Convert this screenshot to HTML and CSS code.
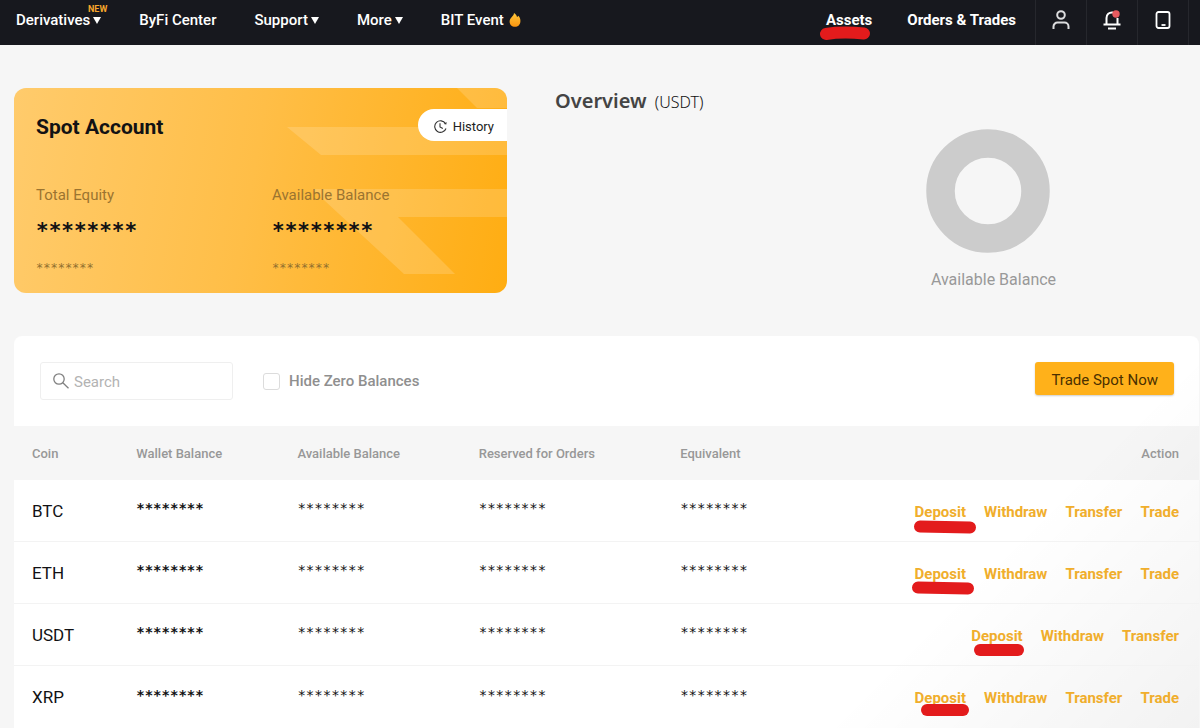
FILE: index.html
```html
<!DOCTYPE html>
<html lang="en">
<head>
<meta charset="utf-8">
<meta name="viewport" content="width=device-width, initial-scale=1">
<title>Spot Account</title>
<link rel="stylesheet" href="styles.css">
</head>
<body>
<header class="topbar">
  <nav class="menu" aria-label="Main">
    <a class="menu-link" href="#">Derivatives<svg class="caret" viewBox="0 0 8 7"><path d="M0 0h8L4 7z"/></svg><span class="new-tag">NEW</span></a>
    <a class="menu-link" href="#">ByFi Center</a>
    <a class="menu-link" href="#">Support<svg class="caret" viewBox="0 0 8 7"><path d="M0 0h8L4 7z"/></svg></a>
    <a class="menu-link" href="#">More<svg class="caret" viewBox="0 0 8 7"><path d="M0 0h8L4 7z"/></svg></a>
    <a class="menu-link" href="#">BIT Event<svg class="flame" viewBox="0 0 12 14"><defs><linearGradient id="fire" x1="0" y1="0" x2="0" y2="1"><stop offset="0" stop-color="#ffc83c"/><stop offset="1" stop-color="#f9930f"/></linearGradient></defs><path fill="url(#fire)" d="M5 0c2 1.200 2.800 2.600 3 4 .6-.2 1-.6 1.300-1.200C11 4.600 11.600 6.300 11.400 8.500 11.200 11.800 9 13.800 6 13.800S.7 11.800.6 8.700C.6 6.600 1.600 5.400 2.800 4 3.900 2.800 4.900 1.800 5 0z"/></svg></a>
  </nav>
  <nav class="account" aria-label="Account">
    <a class="account-link" href="#">Assets<svg class="mark mark-assets" viewBox="0 0 50 13"><path d="M6 7Q22 4.500 44 6.500"/></svg></a>
    <a class="account-link" href="#">Orders &amp; Trades</a>
    <div class="tools">
      <button class="tool" aria-label="Profile"><svg width="18" height="20" viewBox="0 0 18 20" fill="none" stroke="#dcdcde" stroke-width="2"><circle cx="9" cy="5" r="3.800"/><path d="M1.500 19v-2.500a4 4 0 0 1 4-4h7a4 4 0 0 1 4 4V19"/></svg></button>
      <button class="tool" aria-label="Notifications"><svg width="18" height="20" viewBox="0 0 18 20" fill="none" stroke="#fff" stroke-width="2"><path d="M10 2.500C6 2 3.500 4.500 3.500 8v6M14.500 8v6M.5 14.500h17M5 18.500h8"/><circle cx="13" cy="4" r="3.700" fill="#e75a5f" stroke="none"/></svg></button>
      <button class="tool" aria-label="Mobile app"><svg width="16" height="18" viewBox="0 0 16 18" fill="none" stroke="#fff" stroke-width="1.800"><rect x="1.500" y="1" width="13" height="16" rx="2"/><path d="M6.500 14h4"/></svg></button>
    </div>
  </nav>
</header>

<main class="page">
  <div class="summary">
    <section class="card">
      <svg class="card-art" viewBox="0 0 233 205" preserveAspectRatio="xMaxYMid slice"><g fill="#fff" fill-opacity=".16"><path d="M183 0h50v20h-30z"/><path d="M13 39h220v28H47z"/><path d="M38 101h195v28H124l57 57h-51z"/></g></svg>
      <h1 class="card-title">Spot Account</h1>
      <button class="history"><svg width="13" height="13" viewBox="0 0 13 13" fill="none" stroke="#333" stroke-width="1.100"><path d="M11.500 3.600A5.800 5.800 0 1 0 12 8.500M6 3.300V7l2.800 1.600"/><path d="M9.800 3.900l2.500.6.300-2.600z" fill="#333" stroke="none"/></svg>History</button>
      <div class="stats">
        <div class="stat"><span class="stat-label">Total Equity</span><strong class="stat-value">********</strong><span class="stat-sub">********</span></div>
        <div class="stat"><span class="stat-label">Available Balance</span><strong class="stat-value">********</strong><span class="stat-sub">********</span></div>
      </div>
    </section>
    <section class="overview">
      <h2 class="overview-title">Overview <span class="unit">(USDT)</span></h2>
      <figure class="chart">
        <svg class="donut" viewBox="0 0 124 124"><circle cx="62" cy="62" r="47.500" fill="none" stroke="#ccc" stroke-width="28.500"/></svg>
        <figcaption class="chart-label">Available Balance</figcaption>
      </figure>
    </section>
  </div>

  <section class="panel">
    <div class="filters">
      <label class="search"><svg width="16" height="16" viewBox="0 0 16 16" fill="none" stroke="#808080" stroke-width="1.300"><circle cx="6" cy="6" r="5.200"/><path d="M9.800 9.800l5.700 5.500"/></svg><input class="search-input" type="text" placeholder="Search" aria-label="Search"></label>
      <label class="hide-zero"><input class="check" type="checkbox">Hide Zero Balances</label>
      <button class="trade-now">Trade Spot Now</button>
    </div>
    <table class="coins">
      <colgroup><col class="col-coin"><col class="col-wallet"><col class="col-available"><col class="col-reserved"><col class="col-equivalent"><col></colgroup>
      <thead>
        <tr><th>Coin</th><th>Wallet Balance</th><th>Available Balance</th><th>Reserved for Orders</th><th>Equivalent</th><th class="action-head">Action</th></tr>
      </thead>
      <tbody>
        <tr><td class="coin">BTC</td><td class="stars wallet">********</td><td class="stars">********</td><td class="stars">********</td><td class="stars">********</td>
          <td><div class="actions"><a class="action" href="#">Deposit<svg class="mark mark-btc" viewBox="0 0 62 14"><path d="M6 6.500L56 7.500"/></svg></a><a class="action" href="#">Withdraw</a><a class="action" href="#">Transfer</a><a class="action" href="#">Trade</a></div></td></tr>
        <tr><td class="coin">ETH</td><td class="stars wallet">********</td><td class="stars">********</td><td class="stars">********</td><td class="stars">********</td>
          <td><div class="actions"><a class="action" href="#">Deposit<svg class="mark mark-eth" viewBox="0 0 62 14"><path d="M6 6.500L56 7.500"/></svg></a><a class="action" href="#">Withdraw</a><a class="action" href="#">Transfer</a><a class="action" href="#">Trade</a></div></td></tr>
        <tr><td class="coin">USDT</td><td class="stars wallet">********</td><td class="stars">********</td><td class="stars">********</td><td class="stars">********</td>
          <td><div class="actions"><a class="action" href="#">Deposit<svg class="mark mark-usdt" viewBox="0 0 50 12"><path d="M6 6h38"/></svg></a><a class="action" href="#">Withdraw</a><a class="action" href="#">Transfer</a></div></td></tr>
        <tr><td class="coin">XRP</td><td class="stars wallet">********</td><td class="stars">********</td><td class="stars">********</td><td class="stars">********</td>
          <td><div class="actions"><a class="action" href="#">Deposit<svg class="mark mark-xrp" viewBox="0 0 48 12"><path d="M6 6h36"/></svg></a><a class="action" href="#">Withdraw</a><a class="action" href="#">Transfer</a><a class="action" href="#">Trade</a></div></td></tr>
      </tbody>
    </table>
  </section>
</main>
</body>
</html>
```
FILE: styles.css
```css
* { box-sizing: border-box; }

body {
  margin: 0;
  background: #f6f6f6;
  color: #121214;
  font-family: Roboto, "Liberation Sans", sans-serif;
  font-size: 15px;
}

a { color: inherit; text-decoration: none; }
button, input { font: inherit; color: inherit; }
button { border: 0; padding: 0; cursor: pointer; }

/* Top bar */
.topbar {
  display: flex;
  justify-content: space-between;
  height: 45px;
  background: #17181e;
  color: #fff;
  line-height: 40px;
}
.menu { display: flex; gap: 38px; padding-left: 16px; font-weight: 500; white-space: nowrap; }
.menu-link { position: relative; }
.caret { width: 8px; height: 7px; margin-left: 3px; fill: #fff; vertical-align: 1px; }
.flame { width: 12px; height: 14px; margin-left: 5px; vertical-align: -2px; }
.new-tag {
  position: absolute;
  top: 4px;
  right: -6px;
  color: #f7a62b;
  font-size: 9px;
  font-weight: 700;
  line-height: 10px;
}
.account { display: flex; padding-right: 11px; font-weight: 700; white-space: nowrap; }
.account-link { position: relative; margin-right: 35px; }
.account-link:nth-of-type(2) { margin-right: 19px; }
.tools { display: flex; border-right: 1px solid #26272d; }
.tool {
  display: flex;
  align-items: center;
  justify-content: center;
  width: 51px;
  padding-bottom: 6px;
  border-left: 1px solid #26272d;
  background: none;
}

/* Marker strokes under links */
.mark {
  position: absolute;
  overflow: visible;
  fill: none;
  stroke: #e31b1c;
  stroke-width: 12px;
  stroke-linecap: round;
  pointer-events: none;
}
.mark-assets { top: 27px; left: -6px; width: 50px; height: 13px; }
.mark-btc { top: 18px; left: -1px; width: 62px; height: 14px; }
.mark-eth { top: 17px; left: -3px; width: 62px; height: 14px; }
.mark-usdt { top: 18px; left: 3px; width: 50px; height: 12px; }
.mark-xrp { top: 16px; left: 6px; width: 48px; height: 12px; }

/* Summary */
.page { padding: 43px 1px 0 14px; }
.summary { display: grid; grid-template-columns: 493fr 644fr; gap: 48px; }
.card {
  position: relative;
  height: 205px;
  padding: 26px 22px;
  overflow: hidden;
  border-radius: 12px;
  background: linear-gradient(100deg, #ffcb6c, #ffbe47 48%, #ffad12);
}
.card-art { position: absolute; top: 0; right: 0; width: 233px; height: 205px; }
.card-title { position: relative; margin: 0; font-size: 21px; line-height: 26px; font-weight: 700; }
.history {
  position: absolute;
  top: 21px;
  right: 0;
  display: flex;
  align-items: center;
  gap: 6px;
  height: 32px;
  padding: 2px 13px 0 16px;
  border-radius: 16px 0 0 16px;
  background: #fff;
  color: #222;
  font-size: 13px;
}
.stats { position: relative; display: grid; grid-template-columns: 236fr 213fr; margin-top: 45px; }
.stat { display: flex; flex-direction: column; }
.stat-label { color: #9b7430; line-height: 20px; }
.stat-value { margin-top: 14px; font: 700 21px/24px "DejaVu Sans Mono", monospace; }
.stat-sub { margin-top: 17px; color: #92702f; font: 12px/16px "DejaVu Sans Mono", monospace; }

.overview { display: flex; align-items: flex-start; }
.overview-title {
  flex: 0 0 222px;
  margin: 0;
  color: #444;
  font-family: "Noto Sans", sans-serif;
  font-size: 20px;
  font-weight: 600;
  line-height: 26px;
}
.unit { margin-left: 3px; color: #111; font-size: 16px; font-weight: 300; }
.chart { flex: 1; margin: 41px 0 0; text-align: center; }
.donut { display: block; width: 124px; height: 124px; margin: 0 auto; }
.chart-label { margin-top: 17px; padding-left: 11px; color: #999; font-size: 16px; line-height: 20px; }

/* Balances panel */
.panel {
  margin-top: 43px;
  overflow: hidden;
  border-radius: 8px 8px 0 0;
  background: linear-gradient(135deg, transparent 76%, rgba(0, 0, 0, .05)), #fff;
}
.filters { display: flex; align-items: center; height: 90px; padding: 0 25px 0 26px; }
.search {
  display: flex;
  align-items: center;
  gap: 5px;
  width: 193px;
  height: 38px;
  padding: 0 12px;
  border: 1px solid #efefef;
  border-radius: 3px;
}
.search-input { flex: 1; min-width: 0; padding: 2px 0 0; border: 0; outline: 0; background: none; }
.search-input::placeholder { color: #b3b3b3; opacity: 1; }
.hide-zero { display: flex; align-items: center; gap: 9px; margin-left: 30px; color: #8f8f8f; font-weight: 500; }
.check { appearance: none; width: 17px; height: 17px; margin: 0; border: 1px solid #dcdcdc; border-radius: 3px; background: #fff; }
.check:checked { background: #ffb11a; }
.trade-now {
  height: 33px;
  margin: 0 0 5px auto;
  padding: 2px 16px 0;
  border-radius: 3px;
  background: #ffb11a;
  box-shadow: 0 1px 2px rgba(0, 0, 0, .2);
  color: #4a3000;
}

.coins { width: 100%; border-collapse: separate; border-spacing: 0; table-layout: fixed; white-space: nowrap; }
.col-coin { width: 8.8%; }
.col-wallet { width: 13.6%; }
.col-available { width: 15.3%; }
.col-reserved { width: 17%; }
.col-equivalent { width: 12%; }
.coins th {
  height: 54px;
  padding: 0 0 0 18px;
  background: rgba(0, 0, 0, .036);
  color: #989898;
  font-size: 13px;
  font-weight: 500;
  text-align: left;
}
.coins .action-head { padding-right: 20px; text-align: right; }
.coins td { height: 62px; padding: 0 0 0 18px; border-bottom: 1px solid #f3f3f3; }
.coins tr:last-child td { border-bottom: 0; }
.coins .coin { font-size: 17px; }
.coins .stars { padding-bottom: 5px; font: 14px/20px "DejaVu Sans Mono", monospace; }
.coins .wallet { font-weight: 700; }
.actions { display: flex; justify-content: flex-end; gap: 18px; padding: 2px 20px 0 0; }
.action { position: relative; color: #f0ae2c; font-weight: 700; line-height: 20px; }
```
